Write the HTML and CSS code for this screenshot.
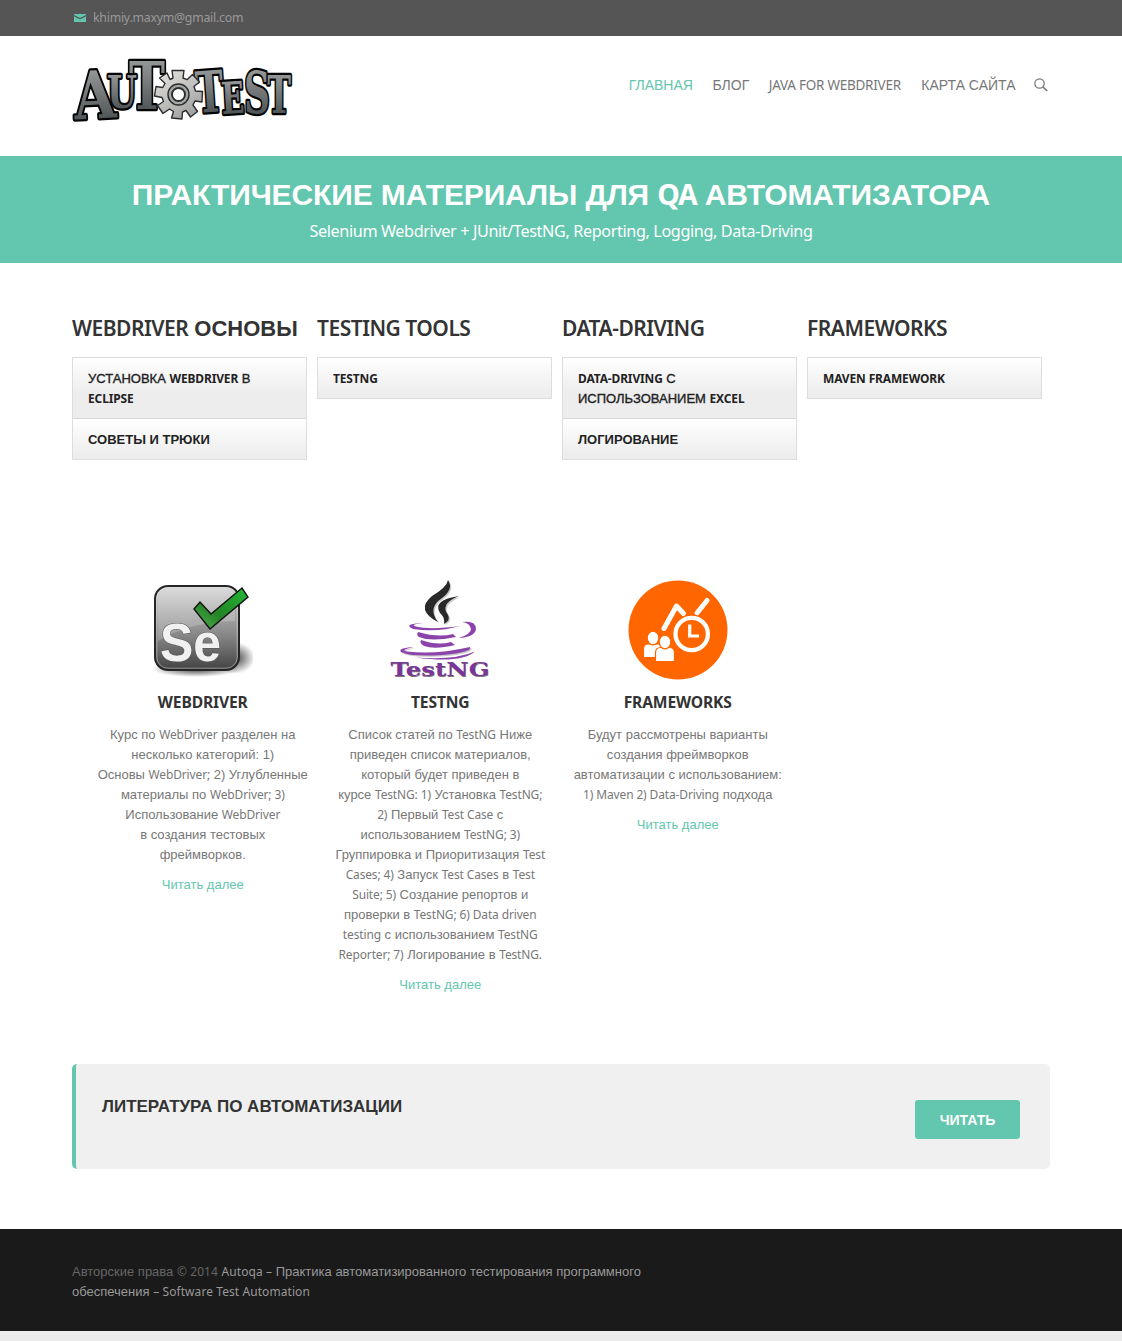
FILE: index.html
```html
<!DOCTYPE html>
<html lang="ru">
<head>
<meta charset="utf-8">
<title>Autoqa</title>
<link rel="stylesheet" href="styles.css">
</head>
<body>
<div class="topbar"><div class="wrap topbar-inner">
  <svg class="mail" width="12" height="8" viewBox="0 0 12 8"><path fill="#63c6ae" d="M0 0h12v1L6 4 0 1zM0 2.300l3 1.600L6 5.300l3-1.400 3-1.600V8H0z"/></svg>
  <span class="en email">khimiy.maxym@gmail.com</span>
</div></div>

<header class="header"><div class="wrap header-inner">
  <svg class="logo" width="224" height="68" viewBox="71 56 224 68" role="img">
    <defs>
      <linearGradient id="steel" x1="0" y1="0" x2="0" y2="1"><stop offset="0" stop-color="#a8aaaa"/><stop offset=".45" stop-color="#777b7b"/><stop offset="1" stop-color="#3a4144"/></linearGradient>
      <linearGradient id="gear" x1="0" y1="0" x2=".6" y2="1"><stop offset="0" stop-color="#e7e6e3"/><stop offset="1" stop-color="#a3a3a1"/></linearGradient>
    </defs>
    <g class="logo-letters">
      <text transform="rotate(-3 95 118)" x="75" y="118.500" font-size="66" textLength="42" lengthAdjust="spacingAndGlyphs">A</text>
      <text x="107" y="107.500" font-size="45" textLength="30" lengthAdjust="spacingAndGlyphs">U</text>
      <text transform="rotate(-4 210 112)" x="197" y="112" font-size="57" textLength="28" lengthAdjust="spacingAndGlyphs">T</text>
      <text x="129" y="109" font-size="66" textLength="36" lengthAdjust="spacingAndGlyphs">T</text>
      <text transform="rotate(-3 232 112)" x="222" y="113.500" font-size="44" textLength="23" lengthAdjust="spacingAndGlyphs">E</text>
      <text x="267" y="113" font-size="52" textLength="24" lengthAdjust="spacingAndGlyphs">T</text>
      <text x="244" y="113" font-size="57" textLength="26" lengthAdjust="spacingAndGlyphs">S</text>
    </g>
    <g transform="translate(178.500 94.500)" stroke="#2b2e2f" stroke-width="1.400" stroke-linejoin="round">
      <path fill="url(#gear)" d="M-5.500-16.500-6.500-24H5.500L4.500-16.500 8.500-14.800 14-20 21-12.500 15.500-8 17-3.500 24-3 23.500 7.500 16.500 6.500 14.500 10.500 19 17 12 22.500 7.500 16 4 17.500 3.500 24.500-7 23.500-5 17-9 14.500-15.500 19-21 11-15 7-16.500 3-24 1.500-22.500-8-15.800-7-13.500-11-19-16.500-11.500-21.500-8.500-15z"/>
      <circle r="10.500" fill="#a5a6a5"/><circle r="6.500" fill="#fff" stroke-width="2"/>
    </g>
  </svg>
  <nav class="nav">
    <a class="active">Главная</a><a>Блог</a><a class="en java">Java for WebDriver</a><a>Карта сайта</a>
    <svg width="14" height="14" viewBox="0 0 14 14" fill="none" stroke="#777"><circle cx="5.500" cy="5.500" r="4.700" stroke-width="1.200"/><path d="m9 9 4.200 4" stroke-width="1.700"/></svg>
  </nav>
</div></header>

<section class="banner">
  <h1>Практические материалы для <span class="en">QA</span> автоматизатора</h1>
  <p class="en">Selenium Webdriver + JUnit/TestNG, Reporting, Logging, Data-Driving</p>
</section>

<main class="content"><div class="wrap">
  <section class="menus">
    <div><h2><span class="en">WebDriver</span> основы</h2><ul><li><i>Установка</i> <span class="en">WebDriver</span> <i>в</i><br><span class="en">Eclipse</span></li><li>Советы и трюки</li></ul></div>
    <div><h2><span class="en">Testing Tools</span></h2><ul><li><span class="en">TestNG</span></li></ul></div>
    <div><h2><span class="en">Data-Driving</span></h2><ul><li><span class="en">Data-Driving</span> <i>с</i><br><i>использованием</i> <span class="en">Excel</span></li><li>Логирование</li></ul></div>
    <div><h2><span class="en">Frameworks</span></h2><ul><li><span class="en">Maven Framework</span></li></ul></div>
  </section>

  <section class="features">
    <article>
      <svg width="100" height="100" viewBox="0 0 100 100">
        <defs>
          <linearGradient id="tile" x1="0" y1="0" x2="0" y2="1"><stop offset="0" stop-color="#d4d4d4"/><stop offset=".6" stop-color="#858585"/><stop offset="1" stop-color="#424242"/></linearGradient>
          <linearGradient id="check" x1="0" y1="1" x2="1" y2="0"><stop offset="0" stop-color="#56b155"/><stop offset=".4" stop-color="#238325"/><stop offset="1" stop-color="#24b936"/></linearGradient>
          <radialGradient id="shade"><stop offset="0" stop-color="#000" stop-opacity=".75"/><stop offset="1" stop-color="#000" stop-opacity="0"/></radialGradient>
        </defs>
        <ellipse cx="82" cy="78" rx="20" ry="16" fill="url(#shade)"/><ellipse cx="43" cy="89" rx="44" ry="8" fill="url(#shade)"/>
        <rect x="2" y="6" width="84" height="84" rx="13" fill="url(#tile)" stroke="#252525" stroke-width="2"/>
        <rect x="3.800" y="7.800" width="80.400" height="80.400" rx="11" fill="none" stroke="#fff" stroke-opacity=".4"/>
        <path d="M5 50V19q0-10 10-10h57q10 0 10 10v22Q36 42 5 61z" fill="#fff" opacity=".2"/>
        <text class="se" x="7" y="80.500" textLength="61" lengthAdjust="spacingAndGlyphs">Se</text>
        <path d="m41 29 6-7 11 12L89 8l6 9-38 32z" fill="url(#check)" stroke="#111" stroke-width="1.400"/>
      </svg>
      <h3><span class="en">WebDriver</span></h3>
      <p>Курс по <span class="en">WebDriver</span> разделен на<br>несколько категорий: 1)<br>Основы <span class="en">WebDriver;</span> 2) Углубленные<br>материалы по <span class="en">WebDriver; 3)</span><br>Использование <span class="en">WebDriver</span><br>в создания тестовых<br>фреймворков.</p>
      <a>Читать далее</a>
    </article>
    <article>
      <svg width="100" height="100" viewBox="0 0 100 100">
        <g transform="translate(1.300 1.300)" fill="#aaa" opacity=".6"><path d="M58 0Q64 9 52 18 37 28 48 42 25 30 42 16 57 7 58 0zM69 16Q57 21 56 26 54 29 58 35 61 40 54 44 55 37 50 33 42 20 69 16z"/><path d="M24 67Q9 70 17 71.500 45 75 80 67 83 72 53 75 20 77 11 72 7 68 24 67z"/></g>
        <g fill="#292929"><path d="M58 0Q64 9 52 18 37 28 48 42 25 30 42 16 57 7 58 0zM69 16Q57 21 56 26 54 29 58 35 61 40 54 44 55 37 50 33 42 20 69 16z"/></g>
        <g fill="#8c43ab"><path d="M33 43Q19 44.500 26 46.500 41 50 70 46 48 52.500 23 49 12 44 33 43zM72 42Q86 40 86 49 85 57 69 58 81 54 81 49 80 43 72 42zM28 52q20 6 35 2l3 3q-25 5-37 0-3-2-1-5zM31 60q17 6 30 2l4 3q-20 5-31 1-5-3-3-6zM24 67Q9 70 17 71.500 45 75 80 67 83 72 53 75 20 77 11 72 7 68 24 67zM26 77.500q38 3 59-6-14 12-59 6z"/></g>
        <text class="ng-shadow" x="1" y="96.700" textLength="99" lengthAdjust="spacingAndGlyphs">TestNG</text>
        <text class="ng" x="0.500" y="96" textLength="99" lengthAdjust="spacingAndGlyphs">TestNG</text>
      </svg>
      <h3><span class="en">TestNG</span></h3>
      <p>Список статей по <span class="en">TestNG</span> Ниже<br>приведен список материалов,<br>который будет приведен в<br>курсе <span class="en">TestNG: 1)</span> Установка <span class="en">TestNG;</span><br><span class="en">2)</span> Первый <span class="en">Test Case</span> с<br>использованием <span class="en">TestNG; 3)</span><br>Группировка и Приоритизация <span class="en">Test</span><br><span class="en">Cases; 4)</span> Запуск <span class="en">Test Cases</span> в <span class="en">Test</span><br><span class="en">Suite; 5)</span> Создание репортов и<br>проверки в <span class="en">TestNG; 6) Data driven</span><br><span class="en">testing</span> с использованием <span class="en">TestNG</span><br><span class="en">Reporter; 7)</span> Логирование в <span class="en">TestNG.</span></p>
      <a>Читать далее</a>
    </article>
    <article>
      <svg width="100" height="100" viewBox="0 0 100 100">
        <circle cx="50" cy="50" r="49.500" fill="#f60"/>
        <path d="M36 48.500 48.500 26l7 7.500M69 33l10-12.500" fill="none" stroke="#fff" stroke-width="5" stroke-linecap="round" stroke-linejoin="round"/>
        <circle cx="63.700" cy="54" r="19.500" fill="#f60"/>
        <circle cx="63.700" cy="54" r="16.200" fill="#f60" stroke="#fff" stroke-width="4.300"/>
        <path d="M61.700 44.500v11.500h9.300" fill="none" stroke="#fff" stroke-width="3.200"/>
        <g fill="#fff" stroke="#f60" stroke-width="1.200"><path d="M15.500 77.500V69q0-5 5-5h10q5 0 5 5v8.500z"/><ellipse cx="25" cy="58" rx="5.800" ry="6.800"/><path d="M27.500 81.500V73q0-5.500 5-5.500h9q5 0 5 5.500v8.500z"/><ellipse cx="37" cy="62" rx="5.800" ry="6.800"/></g>
      </svg>
      <h3><span class="en">Frameworks</span></h3>
      <p>Будут рассмотрены варианты<br>создания фреймворков<br>автоматизации с использованием:<br><span class="en">1) Maven 2) Data-Driving</span> подхода</p>
      <a>Читать далее</a>
    </article>
  </section>

  <section class="cta"><h3>Литература по автоматизации</h3><a class="button">Читать</a></section>
</div></main>

<footer class="footer"><div class="wrap"><p>Авторские права <span class="en">© 2014</span> <a><span class="en">Autoqa –</span> Практика автоматизированного тестирования программного<br>обеспечения <span class="en">– Software Test Automation</span></a></p></div></footer>
</body>
</html>
```
FILE: styles.css
```css
* { box-sizing: border-box; }
body { margin: 0; background: #ebebeb; color: #777; font: 13px/20px "Liberation Sans", Arial, sans-serif; }
h1, h2, h3, p, ul { margin: 0; padding: 0; }
i { font-style: normal; font-weight: 400; -webkit-text-stroke: .35px currentColor; }
svg { display: block; }
.en { font-family: "Noto Sans", "Open Sans", sans-serif; font-size: .92em; line-height: 1; letter-spacing: -.01em; }
.wrap { width: 978px; margin: 0 auto; }

.topbar { height: 36px; background: #555; }
.topbar-inner { display: flex; align-items: center; height: 36px; padding-left: 2px; gap: 7px; color: #999; }
.email { font-size: 12.3px; letter-spacing: -.23px; }

.header { height: 120px; background: #fff; }
.header-inner { display: flex; justify-content: space-between; align-items: flex-start; padding-top: 20px; }
.logo { margin-left: -1px; }
.logo-letters { font-family: "DejaVu Serif", serif; font-weight: 700; fill: url(#steel); stroke: #050505; stroke-width: 4.500; paint-order: stroke; stroke-linejoin: round; }
.nav { display: flex; align-items: center; height: 20px; margin: 19px 2px 0 0; font-size: 14px; text-transform: uppercase; }
.nav a { margin-right: 19.500px; white-space: nowrap; }
.nav a:nth-child(4) { margin-right: 18.500px; }
.nav .active { color: #63c6ae; }
.nav .java { margin-right: 20.500px; padding-top: 1px; font-size: 13.500px; letter-spacing: -.25px; }

.banner { height: 107px; padding-top: 19px; background: #63c6ae; color: #fff; text-align: center; }
.banner h1 { font-size: 30px; line-height: 40px; letter-spacing: -.12px; text-transform: uppercase; white-space: nowrap; }
.banner h1 .en { font-size: 28.500px; letter-spacing: -1.200px; }
.banner p { margin-top: 4px; font-size: 16.200px; line-height: 24px; letter-spacing: -.37px; }

.content { background: #fff; padding-bottom: 60px; }
.menus { display: grid; grid-template-columns: repeat(4, 235px); gap: 10px; height: 317px; padding-top: 50px; }
.menus h2 { padding-top: 1px; margin-bottom: 13px; font-size: 22px; line-height: 30px; color: #333; text-transform: uppercase; white-space: nowrap; }
.menus h2 .en { font-size: 21px; font-weight: 600; letter-spacing: -.5px; }
.menus ul { list-style: none; border: 1px solid #ddd; }
.menus li { padding: 11px 15px 9px; background: linear-gradient(#fff, #ededed 36px); color: #222; font-weight: 700; text-transform: uppercase; }
.menus li + li { border-top: 1px solid #d8d8d8; }

.features { display: grid; grid-template-columns: repeat(3, 237.500px); height: 484px; padding-left: 12px; text-align: center; }
.features svg { margin: 0 auto; }
.features h3 { margin: 11px 0 10px; font-size: 17px; line-height: 24px; color: #333; text-transform: uppercase; }
.features p { margin-bottom: 10px; white-space: nowrap; }
.features a { color: #63c6ae; }
.se { font: 700 53px "Liberation Sans", sans-serif; fill: #f1f1f1; stroke: #555; stroke-width: 1; paint-order: stroke; }
.ng, .ng-shadow { font: 700 18px "DejaVu Serif", serif; fill: #7a3598; }
.ng-shadow { fill: #222; opacity: .6; }

.cta { display: flex; justify-content: space-between; height: 105px; padding: 30px 30px 0 26px; background: #f0f0f0; border-left: 4px solid #63c6ae; border-radius: 5px; }
.cta h3 { margin-top: 1px; font-size: 17px; line-height: 24px; color: #333; text-transform: uppercase; }
.button { width: 105px; height: 39px; margin-top: 6px; border-radius: 3px; background: #63c6ae; color: #fff; font-size: 14px; font-weight: 700; line-height: 40px; text-align: center; text-transform: uppercase; }

.footer { height: 102px; padding-top: 33px; background: #1a1a1a; color: #666; }
.footer a { color: #999; }
.footer .en { letter-spacing: .1px; }
```
